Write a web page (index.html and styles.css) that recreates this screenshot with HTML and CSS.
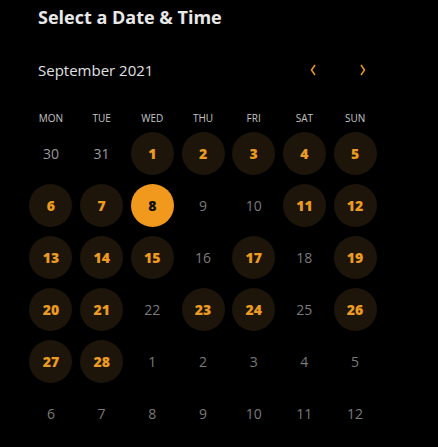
FILE: index.html
```html
<!DOCTYPE html>
<html>
<head>
<meta charset="utf-8">
<link rel="stylesheet" href="styles.css">
</head>
<body>
<div class="panel">
  <h1 class="title">Select a Date &amp; Time</h1>
  <div class="month-bar">
    <span class="month">September 2021</span>
    <div class="nav">
      <button class="arrow" aria-label="Previous month"><svg width="8" height="12" viewBox="0 0 8 12"><path d="M6 1L2.5 6 6 11" fill="none" stroke="#e8991e" stroke-width="1.5"/></svg></button>
      <button class="arrow" aria-label="Next month"><svg width="8" height="12" viewBox="0 0 8 12"><path d="M2 1l3.5 5L2 11" fill="none" stroke="#e8991e" stroke-width="1.5"/></svg></button>
    </div>
  </div>
  <div class="week">
    <div class="dow">MON</div><div class="dow">TUE</div><div class="dow">WED</div><div class="dow">THU</div><div class="dow">FRI</div><div class="dow">SAT</div><div class="dow">SUN</div>
  </div>
  <div class="grid">
    <div class="day muted">30</div><div class="day muted">31</div><div class="day avail">1</div><div class="day avail">2</div><div class="day avail">3</div><div class="day avail">4</div><div class="day avail">5</div>
    <div class="day avail">6</div><div class="day avail">7</div><div class="day selected">8</div><div class="day off">9</div><div class="day off">10</div><div class="day avail">11</div><div class="day avail">12</div>
    <div class="day avail">13</div><div class="day avail">14</div><div class="day avail">15</div><div class="day off">16</div><div class="day avail">17</div><div class="day off">18</div><div class="day avail">19</div>
    <div class="day avail">20</div><div class="day avail">21</div><div class="day off">22</div><div class="day avail">23</div><div class="day avail">24</div><div class="day off">25</div><div class="day avail">26</div>
    <div class="day avail">27</div><div class="day avail">28</div><div class="day next">1</div><div class="day next">2</div><div class="day next">3</div><div class="day next">4</div><div class="day next">5</div>
    <div class="day next">6</div><div class="day next">7</div><div class="day next">8</div><div class="day next">9</div><div class="day next">10</div><div class="day next">11</div><div class="day next">12</div>
  </div>
</div>
</body>
</html>
```
FILE: styles.css
```css
html, body {
  margin: 0;
  padding: 0;
  background: #000;
}
body {
  font-family: "Open Sans", "Lato", sans-serif;
  color: #e6e6e6;
  width: 438px;
  height: 447px;
  overflow: hidden;
}
.panel {
  padding: 5px 0 0 0;
}
.title {
  margin: 0 0 0 38px;
  font-size: 18px;
  font-weight: 700;
  line-height: 24px;
  color: #e8e8e8;
}
.month-bar {
  display: flex;
  align-items: center;
  justify-content: space-between;
  margin: 29px 0 0 38px;
  width: 333px;
  height: 24px;
}
.month {
  font-size: 15px;
  color: #e0e0e0;
}
.nav {
  display: flex;
  gap: 34px;
}
.arrow {
  background: none;
  border: 0;
  padding: 0;
  width: 16px;
  height: 16px;
  display: flex;
  align-items: center;
  justify-content: center;
}
.week,
.grid {
  display: grid;
  grid-template-columns: repeat(7, 50.7px);
  margin-left: 25.6px;
  justify-items: center;
  align-items: center;
}
.week {
  margin-top: 29px;
  height: 14px;
}
.dow {
  font-size: 10px;
  line-height: 14px;
  color: #c4c4c4;
}
.grid {
  grid-auto-rows: 43px;
  row-gap: 9px;
  margin-top: 7px;
}
.day {
  width: 43px;
  height: 43px;
  border-radius: 50%;
  display: flex;
  align-items: center;
  justify-content: center;
  font-size: 14px;
}
.avail {
  background: #1d150a;
  color: #eb9b22;
  font-weight: 800;
}
.selected {
  background: #f0991c;
  color: #111;
  font-weight: 800;
}
.muted {
  color: #9a9a9a;
}
.off,
.next {
  color: #7a7a7a;
}
```
